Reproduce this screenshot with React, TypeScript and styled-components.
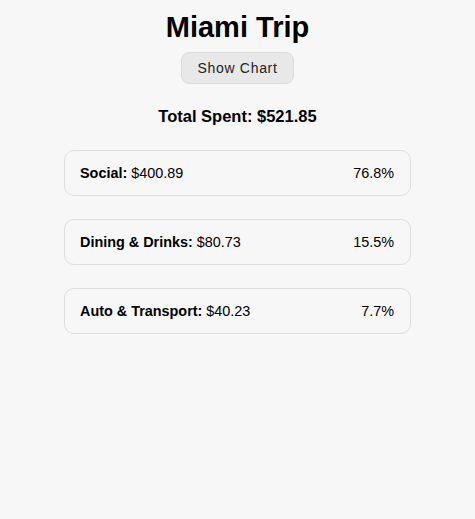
import styled, { createGlobalStyle } from "styled-components";

const GlobalStyle = createGlobalStyle`
    body {
        margin: 0;
        background: #f7f7f7;
        font-family: "Liberation Sans", Arial, sans-serif;
        color: #000;
    }
`;

const Page = styled.div`
    display: flex;
    flex-direction: column;
    align-items: center;
    padding-top: 10px;
`;

const Title = styled.h1`
    margin: 0;
    font-size: 29px;
    font-weight: bold;
    line-height: 34px;
`;

const ChartButton = styled.button`
    margin-top: 8px;
    height: 32px;
    padding: 0 15px;
    background: #e8e8e8;
    border: 1px solid #dcdcdc;
    border-radius: 8px;
    font-family: inherit;
    font-size: 14px;
    letter-spacing: 0.7px;
    color: #222;
    cursor: pointer;
`;

const Total = styled.h2`
    margin: 22px 0 0;
    font-size: 16.5px;
    font-weight: bold;
    line-height: 20px;
`;

const List = styled.div`
    margin-top: 24px;
    width: 347px;
    display: flex;
    flex-direction: column;
    gap: 23px;
`;

const Card = styled.div`
    box-sizing: border-box;
    height: 46px;
    display: flex;
    align-items: center;
    justify-content: space-between;
    padding: 0 16px 0 15px;
    border: 1px solid #dedede;
    border-radius: 10px;
    font-size: 14.4px;
`;

const Label = styled.strong`
    font-weight: bold;
`;

const categories = [
    { name: "Social", amount: 400.89, percent: 76.8 },
    { name: "Dining & Drinks", amount: 80.73, percent: 15.5 },
    { name: "Auto & Transport", amount: 40.23, percent: 7.7 },
];

export default function App() {
    return (
        <>
            <GlobalStyle />
            <Page>
                <Title>Miami Trip</Title>
                <ChartButton>Show Chart</ChartButton>
                <Total>Total Spent: $521.85</Total>
                <List>
                    {categories.map((c) => (
                        <Card key={c.name}>
                            <span>
                                <Label>{c.name}:</Label> ${c.amount.toFixed(2)}
                            </span>
                            <span>{c.percent.toFixed(1)}%</span>
                        </Card>
                    ))}
                </List>
            </Page>
        </>
    );
}
